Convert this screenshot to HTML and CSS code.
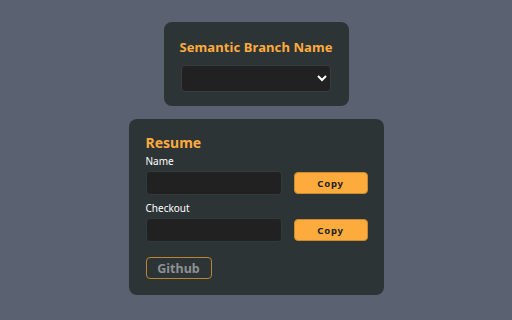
FILE: index.html
```html
<!DOCTYPE html>
<html lang="en">
<head>
<meta charset="UTF-8">
<title>Semantic Branch Name</title>
<link rel="stylesheet" href="styles.css">
</head>
<body>
<div class="page">
<div class="card card-top">
<h1>Semantic Branch Name</h1>
<select class="branch-select"></select>
</div>
<div class="card card-resume">
<h2>Resume</h2>
<label class="field-label">Name</label>
<div class="row">
<input type="text" class="field">
<button class="copy-btn">Copy</button>
</div>
<label class="field-label">Checkout</label>
<div class="row">
<input type="text" class="field">
<button class="copy-btn">Copy</button>
</div>
<button class="github-btn">Github</button>
</div>
</div>
</body>
</html>
```

FILE: styles.css
```css
body {
margin: 0;
background: #5a6170;
font-family: "Noto Sans", "Open Sans", sans-serif;
}
.page {
display: flex;
flex-direction: column;
align-items: center;
gap: 13px;
padding-top: 22px;
}
.card {
background: #2d3436;
border-radius: 8px;
box-sizing: border-box;
}
.card-top {
width: 185px;
height: 84px;
padding: 16px 10px 0;
display: flex;
flex-direction: column;
align-items: center;
}
.card-top h1 {
margin: 0 0 9px;
color: #fdab3d;
font-size: 13px;
font-weight: bold;
line-height: 18px;
white-space: nowrap;
letter-spacing: 0.1px;
}
.branch-select {
width: 150px;
height: 27px;
background: #212121;
border: 1px solid #383c3e;
border-radius: 4px;
color: #fff;
}
.card-resume {
width: 255px;
height: 176px;
padding: 15px 17px 0;
display: flex;
flex-direction: column;
align-items: flex-start;
}
.card-resume h2 {
margin: 0 0 3px;
color: #fdab3d;
font-size: 14px;
font-weight: bold;
line-height: 18px;
}
.field-label {
color: #fff;
font-size: 10px;
line-height: 12px;
margin-bottom: 4px;
}
.row {
display: flex;
align-items: center;
gap: 12px;
margin-bottom: 7px;
}
.field {
width: 136px;
height: 24px;
box-sizing: border-box;
background: #212121;
border: 1px solid #34393b;
border-radius: 4px;
}
.copy-btn {
width: 74px;
height: 22px;
background: #fdab3d;
border: 1px solid #c98a30;
border-radius: 4px;
color: #222;
font-family: inherit;
font-size: 9.5px;
font-weight: bold;
letter-spacing: 0.8px;
padding: 0;
}
.github-btn {
margin-top: 8px;
width: 66px;
height: 22px;
background: transparent;
border: 1px solid #b8862e;
border-radius: 4px;
color: #8c9193;
font-family: inherit;
font-size: 12.5px;
font-weight: bold;
padding: 0;
}
```
